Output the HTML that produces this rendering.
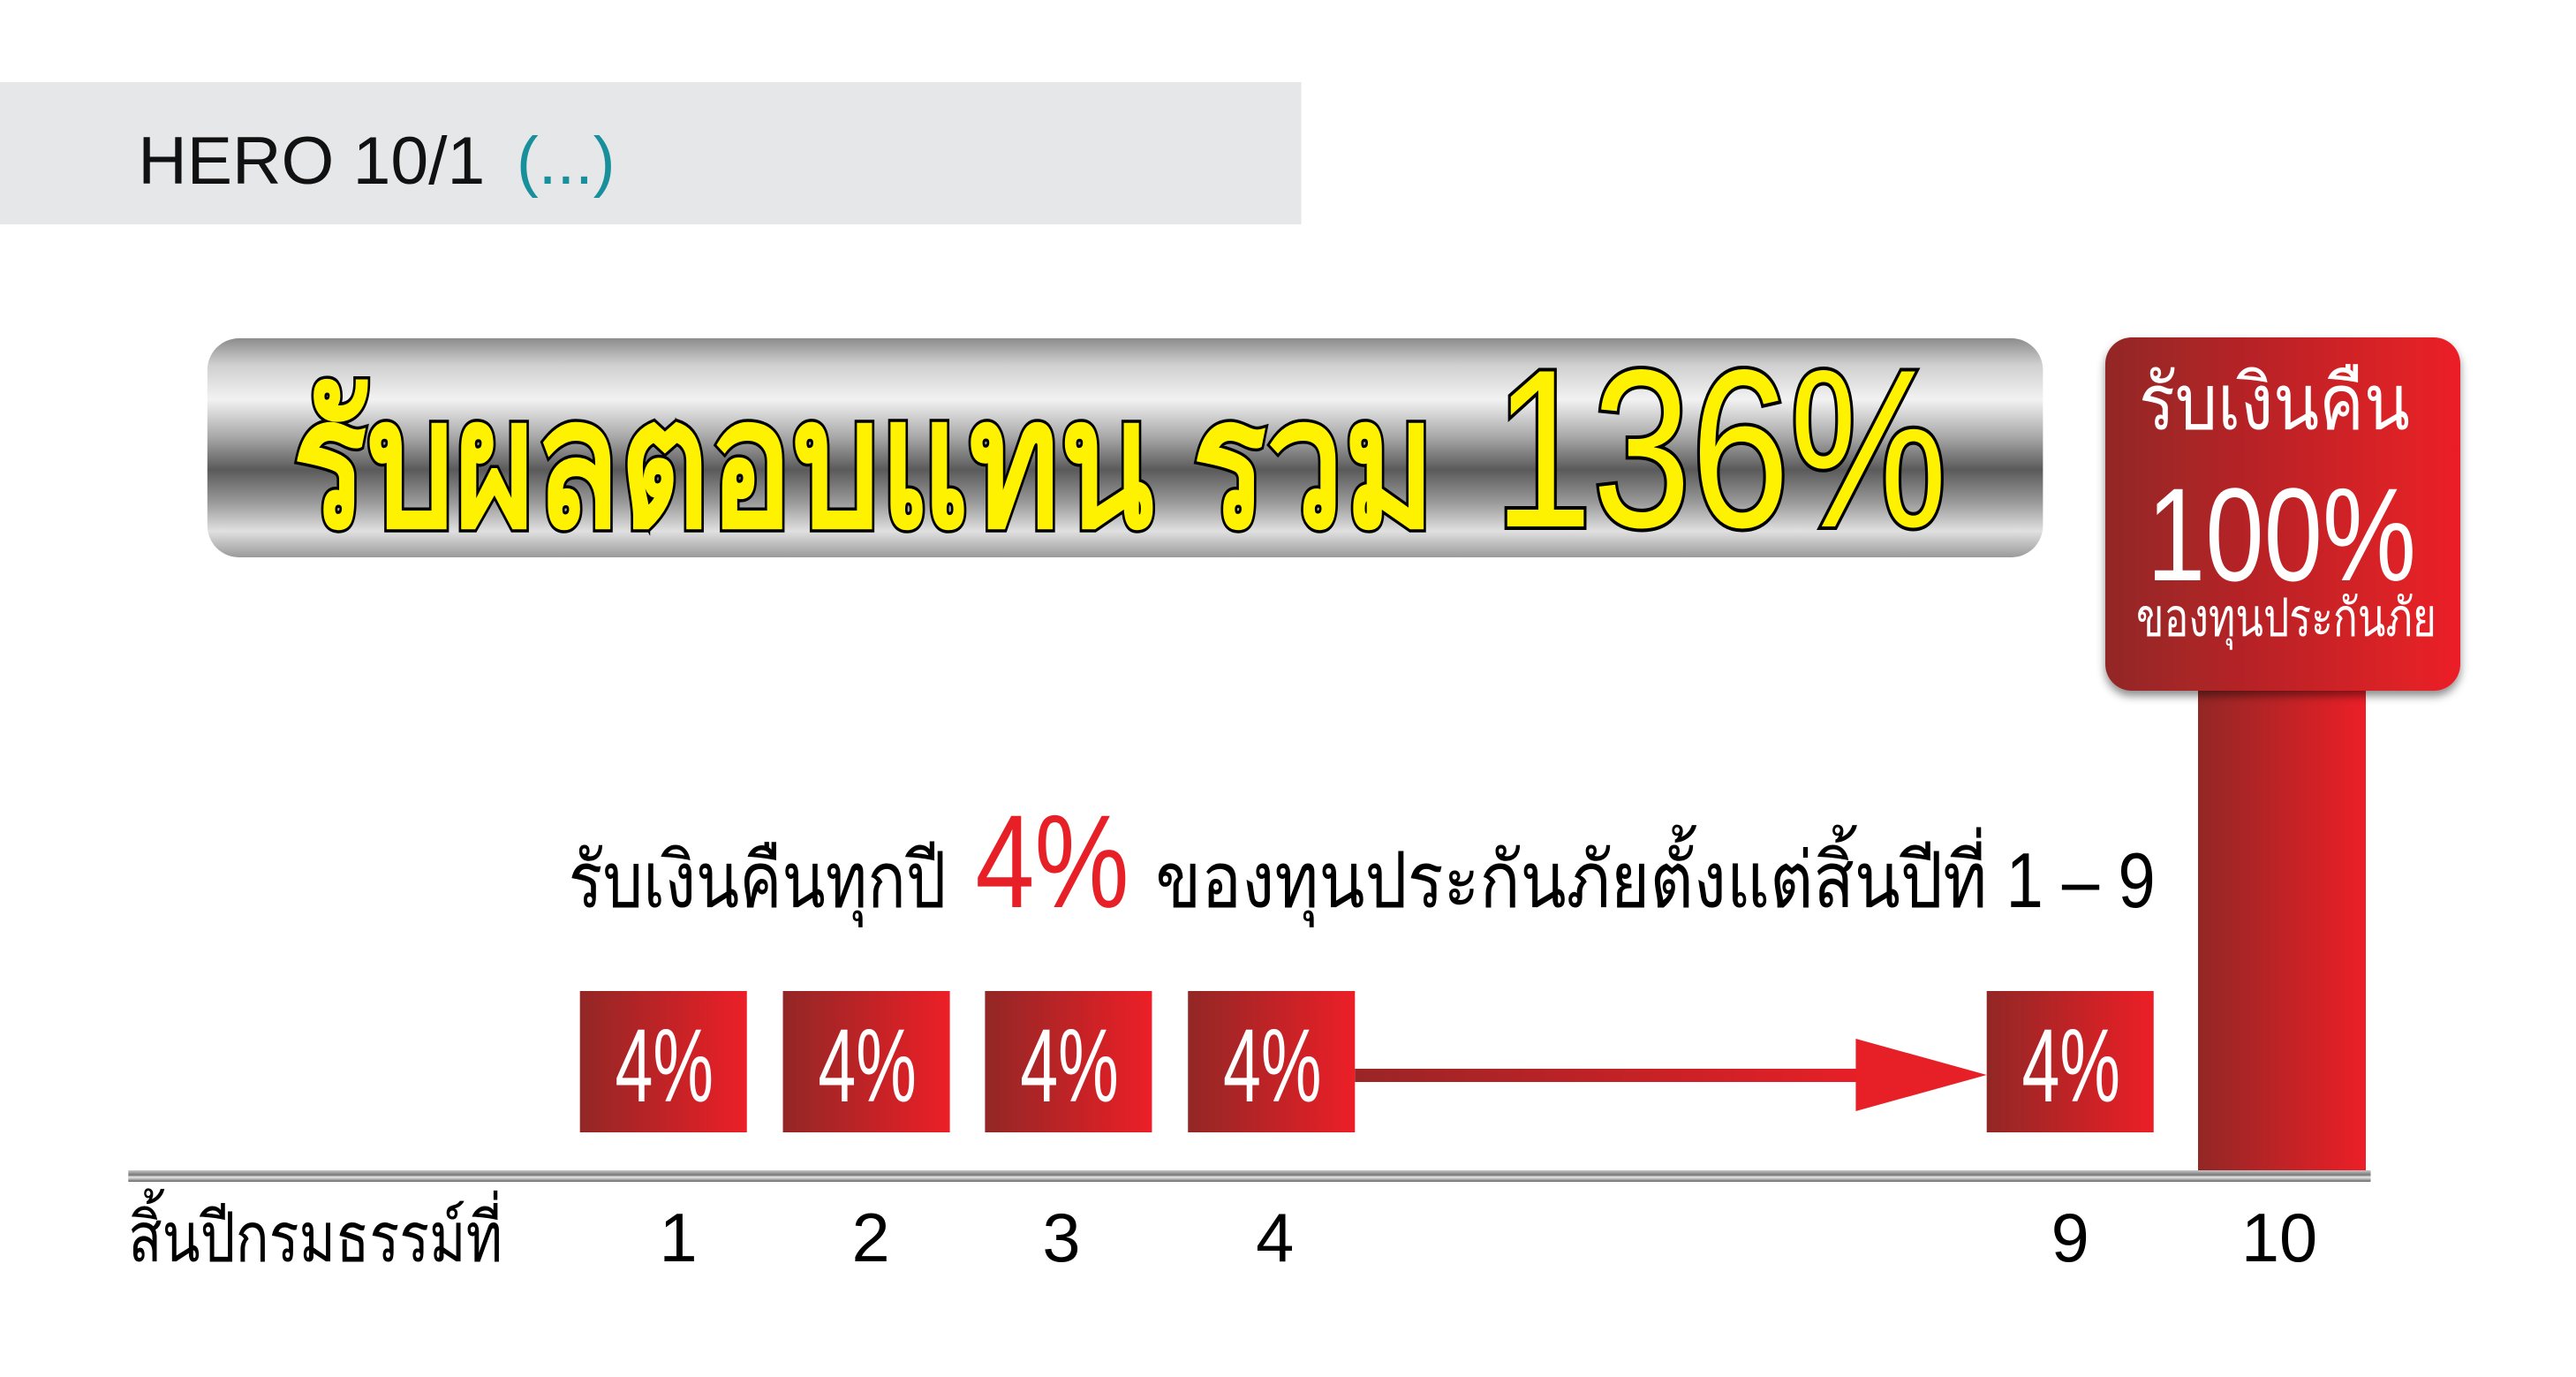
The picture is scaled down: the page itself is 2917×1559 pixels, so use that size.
<!DOCTYPE html>
<html><head><meta charset="utf-8"><style>
html,body{margin:0;padding:0;background:#fff;width:2917px;height:1559px;overflow:hidden}
svg{display:block}
text{font-family:"Liberation Sans","DejaVu Sans",sans-serif}
</style></head><body>
<svg width="2917" height="1559" viewBox="0 0 2917 1559" xmlns="http://www.w3.org/2000/svg">
<defs>
<linearGradient id="silver" x1="0" y1="0" x2="0" y2="1">
<stop offset="0" stop-color="#8c8c8c"/>
<stop offset="0.12" stop-color="#cfcfcf"/>
<stop offset="0.28" stop-color="#f2f2f2"/>
<stop offset="0.45" stop-color="#a8a8a8"/>
<stop offset="0.6" stop-color="#5a5a5a"/>
<stop offset="0.75" stop-color="#9a9a9a"/>
<stop offset="0.88" stop-color="#e0e0e0"/>
<stop offset="1" stop-color="#9a9a9a"/>
</linearGradient>
<linearGradient id="red" x1="0" y1="0" x2="1" y2="0">
<stop offset="0" stop-color="#922725"/>
<stop offset="1" stop-color="#ec1f27"/>
</linearGradient>
<linearGradient id="line" x1="0" y1="0" x2="0" y2="1">
<stop offset="0" stop-color="#c8c8c8"/>
<stop offset="0.4" stop-color="#777"/>
<stop offset="0.6" stop-color="#e8e8e8"/>
<stop offset="1" stop-color="#666"/>
</linearGradient>
<linearGradient id="arrow" x1="0" y1="0" x2="1" y2="0">
<stop offset="0" stop-color="#9a2526"/>
<stop offset="1" stop-color="#e71f27"/>
</linearGradient>
<filter id="sh" x="-10%" y="-10%" width="120%" height="120%"><feDropShadow dx="0" dy="6" stdDeviation="5" flood-color="#000" flood-opacity="0.45"/></filter>
</defs>

<rect x="2489" y="760" width="190" height="568" fill="url(#red)"/>
<rect x="2384" y="382" width="402" height="400" rx="30" fill="url(#red)" filter="url(#sh)"/>
<text x="2422" y="486" font-size="88" fill="#fff" textLength="307" lengthAdjust="spacingAndGlyphs">รับเงินคืน</text>
<text x="2431" y="657" font-size="150" fill="#fff" textLength="305" lengthAdjust="spacingAndGlyphs">100%</text>
<text x="2419" y="720" font-size="60" fill="#fff" textLength="340" lengthAdjust="spacingAndGlyphs">ของทุนประกันภัย</text>

<g transform="scale(0.995,1)">
<rect x="0" y="93" width="1481" height="161" fill="#e6e7e8"/>
<text x="157" y="208" font-size="76" fill="#111" textLength="395" lengthAdjust="spacingAndGlyphs">HERO 10/1</text>
<text x="588" y="208" font-size="76" fill="#17909c" textLength="112" lengthAdjust="spacingAndGlyphs">(...)</text>

<rect x="236" y="383" width="2089" height="248" rx="36" fill="url(#silver)"/>
<text x="333" y="596" font-size="205" font-weight="bold" fill="#fff200" stroke="#000" stroke-width="7" paint-order="stroke" textLength="1300" lengthAdjust="spacingAndGlyphs">รับผลตอบแทน รวม</text>
<text x="1700" y="596" font-size="255" fill="#fff200" stroke="#000" stroke-width="8" paint-order="stroke" textLength="516" lengthAdjust="spacingAndGlyphs">136%</text>

<text x="647" y="1027" font-size="88" fill="#000" textLength="430" lengthAdjust="spacingAndGlyphs">รับเงินคืนทุกปี</text>
<text x="1110" y="1027" font-size="150" fill="#e71f27" textLength="175" lengthAdjust="spacingAndGlyphs">4%</text>
<text x="1315" y="1027" font-size="88" fill="#000" textLength="1138" lengthAdjust="spacingAndGlyphs">ของทุนประกันภัยตั้งแต่สิ้นปีที่ 1 – 9</text>

<g fill="url(#red)">
<rect x="660" y="1122" width="190" height="160"/>
<rect x="891" y="1122" width="190" height="160"/>
<rect x="1121" y="1122" width="190" height="160"/>
<rect x="1352" y="1122" width="190" height="160"/>
<rect x="2261" y="1122" width="190" height="160"/>
</g>
<rect x="1542" y="1210" width="580" height="15" fill="url(#arrow)"/>
<polygon points="2112,1176 2261,1217 2112,1258" fill="#e71f27"/>
<g font-size="118" fill="#fff">
<text x="700" y="1247" textLength="112" lengthAdjust="spacingAndGlyphs">4%</text>
<text x="931" y="1247" textLength="112" lengthAdjust="spacingAndGlyphs">4%</text>
<text x="1161" y="1247" textLength="112" lengthAdjust="spacingAndGlyphs">4%</text>
<text x="1392" y="1247" textLength="112" lengthAdjust="spacingAndGlyphs">4%</text>
<text x="2301" y="1247" textLength="112" lengthAdjust="spacingAndGlyphs">4%</text>
</g>

<rect x="146" y="1325" width="2552" height="13" fill="url(#line)"/>

<g font-size="78" fill="#000">
<text x="146" y="1428" textLength="426" lengthAdjust="spacingAndGlyphs">สิ้นปีกรมธรรม์ที่</text>
<text x="772" y="1428" text-anchor="middle">1</text>
<text x="991" y="1428" text-anchor="middle">2</text>
<text x="1208" y="1428" text-anchor="middle">3</text>
<text x="1451" y="1428" text-anchor="middle">4</text>
<text x="2356" y="1428" text-anchor="middle">9</text>
<text x="2594" y="1428" text-anchor="middle">10</text>
</g>
</g>
</svg>
</body></html>
